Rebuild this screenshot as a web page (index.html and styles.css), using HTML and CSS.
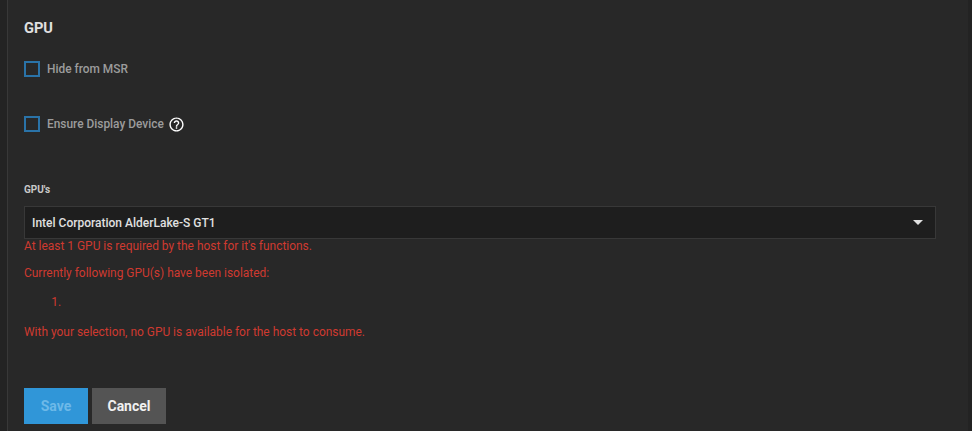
FILE: index.html
```html
<!DOCTYPE html>
<html lang="en">
<head>
    <meta charset="UTF-8">
    <title>GPU</title>
    <link rel="stylesheet" href="styles.css">
</head>
<body>
    <div class="card">
        <h4 class="title">GPU</h4>

        <label class="check">
            <span class="box"></span>
            <span class="check-label">Hide from MSR</span>
        </label>

        <label class="check check-second">
            <span class="box"></span>
            <span class="check-label">Ensure Display Device</span>
            <svg class="help" viewBox="0 0 24 24" width="17" height="17">
                <path fill="#fff" d="M11 18h2v-2h-2v2zm1-16C6.48 2 2 6.48 2 12s4.48 10 10 10 10-4.48 10-10S17.52 2 12 2zm0 18c-4.41 0-8-3.59-8-8s3.59-8 8-8 8 3.59 8 8-3.59 8-8 8zm0-14c-2.21 0-4 1.79-4 4h2c0-1.1.9-2 2-2s2 .9 2 2c0 2-3 1.75-3 5h2c0-2.25 3-2.5 3-5 0-2.21-1.79-4-4-4z"/>
            </svg>
        </label>

        <div class="field-label">GPU's</div>
        <div class="select">
            <span>Intel Corporation AlderLake-S GT1</span>
            <span class="arrow"></span>
        </div>

        <div class="errors">
            <div>At least 1 GPU is required by the host for it's functions.</div>
            <div class="err-line">Currently following GPU(s) have been isolated:</div>
            <ol class="err-list"><li></li></ol>
            <div class="err-last">With your selection, no GPU is available for the host to consume.</div>
        </div>

        <div class="actions">
            <button class="btn btn-save" disabled>Save</button>
            <button class="btn btn-cancel">Cancel</button>
        </div>
    </div>
</body>
</html>
```

FILE: styles.css
```css
* {
    margin: 0;
    padding: 0;
    box-sizing: border-box;
}

html, body {
    height: 431px;
    overflow: hidden;
}

body {
    background-color: #232323;
    font-family: Roboto, "Liberation Sans", sans-serif;
    padding-left: 7px;
}

.card {
    width: 961px;
    height: 431px;
    padding: 19px 0 0 16px;
    background-color: #282828;
    border-left: 1px solid #383838;
}

.title {
    font-size: 14.6px;
    line-height: 18px;
    font-weight: 700;
    color: #e0e0e0;
}

.check {
    display: flex;
    align-items: center;
    height: 16px;
    margin-top: 24px;
}

.check-second {
    margin-top: 39px;
}

.box {
    width: 16px;
    height: 16px;
    border: 2px solid #2a73a8;
    margin-right: 7px;
}

.check-label {
    font-size: 11.9px;
    font-weight: 500;
    color: #9c9c9c;
}

.help {
    margin-left: 4px;
}

.field-label {
    margin-top: 52px;
    font-size: 10px;
    line-height: 12px;
    font-weight: 700;
    color: #c8c8c8;
}

.select {
    display: flex;
    justify-content: space-between;
    align-items: center;
    width: 912px;
    height: 33px;
    margin-top: 10px;
    padding: 0 12px 0 7px;
    background-color: #1e1e1e;
    border: 1px solid #383838;
    font-size: 12px;
    font-weight: 500;
    color: #e0e0e0;
}

.arrow {
    width: 0;
    height: 0;
    border-left: 5px solid transparent;
    border-right: 5px solid transparent;
    border-top: 5px solid #e0e0e0;
}

.errors {
    font-size: 11.94px;
    line-height: 14px;
    color: #cf3a30;
}

.err-line {
    margin-top: 13px;
}

.err-list {
    margin-top: 15px;
    padding-left: 40px;
}

.err-list li {
    height: 14px;
}

.err-last {
    margin-top: 16px;
}

.actions {
    display: flex;
    gap: 4px;
    margin-top: 49px;
}

.btn {
    height: 36px;
    border: none;
    font-family: inherit;
    font-size: 14px;
    font-weight: 700;
}

.btn-save {
    width: 64px;
    background-color: #3096d8;
    color: #6db9e8;
}

.btn-cancel {
    width: 74px;
    background-color: #545454;
    color: #f0f0f0;
}
```
